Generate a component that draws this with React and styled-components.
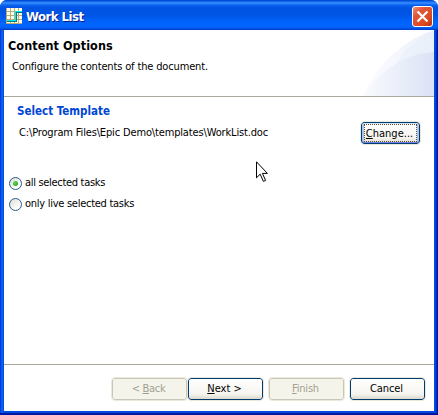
import React from "react";
import styled, { createGlobalStyle, css } from "styled-components";

const Global = createGlobalStyle`
  *, *::before, *::after { box-sizing: border-box; }
  body { margin: 0; background: #fff; overflow: hidden; }
`;

const Window = styled.div`
  width: 438px;
  height: 415px;
  display: flex;
  flex-direction: column;
  border-radius: 7px 7px 0 0;
  overflow: hidden;
  background: #0046e4;
  color: #000;
  font: 11px/14px "DejaVu Sans Condensed", "DejaVu Sans", sans-serif;
  font-stretch: condensed;
  white-space: nowrap;
`;

const TitleBar = styled.header`
  height: 30px;
  flex: none;
  display: flex;
  align-items: flex-start;
  padding: 6px 5px 0 6px;
  background: linear-gradient(#0040c0 0, #0458e8 1px, #3a90ff 3px, #0a62ee 5px, #0054e3 8px,
    #0055e5 15px, #0062fa 21px, #0066ff 26px, #005cf0 28px, #0038c4 30px);
`;

const AppIcon = styled.svg`
  flex: none;
  margin-top: 2px;
`;

const Title = styled.h1`
  flex: 1;
  margin: 2px 0 0 4px;
  color: #fff;
  font: bold 13px/18px "DejaVu Sans Condensed", "DejaVu Sans", sans-serif;
  font-stretch: condensed;
  letter-spacing: -0.5px;
  text-shadow: 1px 1px 0 #0a1e84;
`;

const CloseButton = styled.button`
  width: 21px;
  height: 21px;
  padding: 0;
  display: grid;
  place-items: center;
  border: 1px solid #fff;
  border-radius: 3px;
  background: linear-gradient(135deg, #ee9276 0, #e2563a 30%, #dc4a20 70%, #b83410 100%);
`;

const Frame = styled.div`
  flex: 1;
  min-height: 0;
  padding: 0 4px 2px;
  background: linear-gradient(90deg, #0030c8 0, #0050ee 1px, #1463f4 2px, #0048e0 4px,
    #0048e0 434px, #0050ee 435px, #001fb0 437px, #00108c 438px);
  border-bottom: 2px solid #0018a0;
`;

const Client = styled.main`
  height: 381px;
  display: flex;
  flex-direction: column;
  background: #fff;
`;

const Banner = styled.section`
  height: 67px;
  flex: none;
  display: flex;
  justify-content: space-between;
  border-bottom: 1px solid #aca899;
`;

const Swoosh = styled.svg`
  display: block;
  flex: none;
`;

const BannerText = styled.div`
  padding: 8px 0 0 4px;
`;

const Heading = styled.h2`
  margin: 0;
  font: bold 12.5px/16px "DejaVu Sans Condensed", "DejaVu Sans", sans-serif;
  font-stretch: condensed;
  letter-spacing: 0.08px;
`;

const Description = styled.p`
  margin: 6px 0 0 4px;
  letter-spacing: -0.15px;
`;

const Body = styled.section`
  height: 267px;
  flex: none;
  padding: 7px 14px 0 5px;
`;

const SectionTitle = styled.h3`
  margin: 0 0 0 8px;
  color: #0046d5;
  font-size: 11.5px;
  line-height: 14px;
  letter-spacing: 0;
`;

const TemplateRow = styled.div`
  height: 22px;
  margin-top: 4px;
  padding-left: 10px;
  display: flex;
  align-items: center;
  justify-content: space-between;
`;

const Text = styled.span`
  letter-spacing: ${(p) => p.$spacing ?? 0}px;
`;

const Options = styled.div`
  margin-top: 32px;
  display: flex;
  flex-direction: column;
  gap: 7px;
`;

const Option = styled.label`
  height: 14px;
  display: flex;
  align-items: center;
  gap: 3px;
`;

const Radio = styled.span`
  width: 13px;
  height: 13px;
  display: grid;
  place-items: center;
  border: 1px solid #2c5c88;
  border-radius: 50%;
  background: linear-gradient(135deg, #dcdcd6, #fff 75%);
  &::after {
    content: "";
    width: 5px;
    height: 5px;
    border-radius: 50%;
    background: ${(p) => (p.$checked ? "radial-gradient(circle at 35% 35%, #5fd65c, #1b9a1a)" : "none")};
  }
`;

const Button = styled.button`
  width: ${(p) => p.$width ?? 75}px;
  height: 22px;
  padding: 0 2px 1px 0;
  border: 1px solid #003c74;
  border-radius: 3px;
  outline: 1px solid #ece9d8;
  background: linear-gradient(#fff, #f5f4ef 75%, #dcd8cc);
  color: #000;
  font: inherit;
  letter-spacing: ${(p) => p.$spacing ?? 0}px;
  ${(p) => p.disabled && css`
    border-color: #c9c7ba;
    background: #f5f4ea;
    color: #a1a192;
  `}
  ${(p) => p.$focused && css`
    padding: 0;
    box-shadow: inset 0 1px #cee7ff, inset 0 -1px #6982ee, inset 2px 0 #a9c5f3, inset -2px 0 #a9c5f3;
  `}
`;

const FocusRing = styled.span`
  display: block;
  height: 18px;
  margin: 0 2px;
  padding-right: 2px;
  border: 1px dotted #6b4a20;
  line-height: 17px;
`;

const Key = styled.span`
  text-decoration: underline;
  text-underline-offset: 1px;
  text-decoration-thickness: 1px;
`;

const Footer = styled.footer`
  flex: 1;
  display: flex;
  justify-content: flex-end;
  align-items: flex-start;
  gap: 6px;
  padding: 13px 9px 0 0;
  border-top: 1px solid #aca899;
`;

const ButtonPair = styled.div`
  display: flex;
  gap: 1px;
`;

const Pointer = styled.svg`
  position: absolute;
  left: 256px;
  top: 161px;
`;

const GridIcon = () => (
  <AppIcon width="16" height="16" viewBox="0 0 16 16" shapeRendering="crispEdges">
    <path fill="#fffff0" d="M0 0h16v16H0z" />
    <path fill="none" stroke="#b8ab78" d="M.5 0v16M4.5 0v16M8.5 0v16M12.5 0v16M0 3.5h16M0 7.5h16M0 11.5h16M0 15.5h16" />
    <path fill="none" stroke="#007c80" d="M1 13.5h9.5V4.5H16" />
    <path fill="none" stroke="#00ecf4" d="M1 12.5h8.5V3.5H16" />
  </AppIcon>
);

const CloseIcon = () => (
  <svg width="13" height="13" viewBox="0 0 13 13">
    <path d="M1.5 1.5l10 10M11.5 1.5l-10 10" stroke="#fff" strokeWidth="2.2" />
  </svg>
);

const BannerArt = () => (
  <Swoosh width="75" height="66" viewBox="0 0 75 66">
    <defs>
      <linearGradient id="back">
        <stop offset="0" stopColor="#fcfdff" />
        <stop offset="1" stopColor="#ecf0fa" />
      </linearGradient>
      <linearGradient id="front">
        <stop offset="0" stopColor="#fafbfe" />
        <stop offset="1" stopColor="#dbe2f5" />
      </linearGradient>
    </defs>
    <path d="M3 66Q30 14 75 0v66z" fill="url(#back)" />
    <path d="M34 40Q48 12 75 1v24Q52 25 34 40z" fill="#e8eefa" opacity=".55" />
    <path d="M3 66Q34 24 75 22v44z" fill="url(#front)" />
  </Swoosh>
);

export default function App() {
  return (
    <>
      <Global />
      <Window>
        <TitleBar>
          <GridIcon />
          <Title>Work List</Title>
          <CloseButton aria-label="Close"><CloseIcon /></CloseButton>
        </TitleBar>
        <Frame>
          <Client>
            <Banner>
              <BannerText>
                <Heading>Content Options</Heading>
                <Description>Configure the contents of the document.</Description>
              </BannerText>
              <BannerArt />
            </Banner>
            <Body>
              <SectionTitle>Select Template</SectionTitle>
              <TemplateRow>
                <Text $spacing={-0.15}>C:\Program Files\Epic Demo\templates\WorkList.doc</Text>
                <Button $width={59} $focused>
                  <FocusRing><Key>C</Key>hange...</FocusRing>
                </Button>
              </TemplateRow>
              <Options>
                <Option><Radio $checked /><Text $spacing={-0.31}>all selected tasks</Text></Option>
                <Option><Radio /><Text $spacing={-0.27}>only live selected tasks</Text></Option>
              </Options>
            </Body>
            <Footer>
              <ButtonPair>
                <Button disabled $spacing={-0.3}>&lt; <Key>B</Key>ack</Button>
                <Button><Key>N</Key>ext &gt;</Button>
              </ButtonPair>
              <Button disabled $spacing={-0.2}><Key>F</Key>inish</Button>
              <Button $spacing={-0.1}>Cancel</Button>
            </Footer>
          </Client>
        </Frame>
      </Window>
      <Pointer width="12" height="22" viewBox="0 0 12 22">
        <path d="M.5.8v16l3.7-3.6 3.2 7.2 2.2-1-3.2-7h5z" fill="#fff" stroke="#000" />
      </Pointer>
    </>
  );
}
